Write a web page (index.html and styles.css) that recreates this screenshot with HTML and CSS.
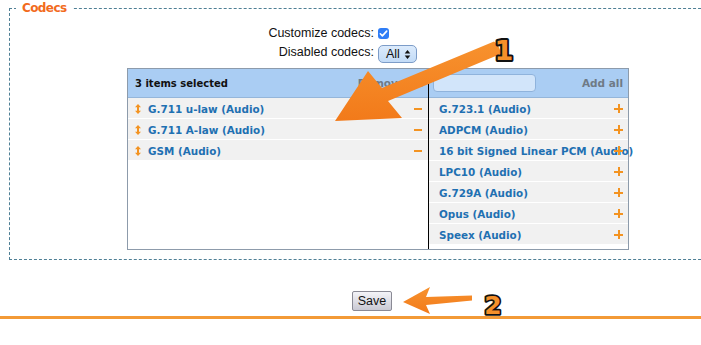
FILE: index.html
```html
<!DOCTYPE html>
<html>
<head>
<meta charset="utf-8">
<link rel="stylesheet" href="styles.css">
</head>
<body>
<fieldset class="codecs">
  <legend class="codecs-legend">Codecs</legend>
  <div class="codecs-body">
    <div class="form-grid">
      <span class="lbl">Customize codecs:</span>
      <span class="ctl"><span class="check"><svg width="11" height="11" viewBox="0 0 11 11"><path d="M2.3 5.8 L4.4 7.9 L8.7 3.1" fill="none" stroke="#fff" stroke-width="1.6" stroke-linecap="round" stroke-linejoin="round"/></svg></span></span>
      <span class="lbl">Disabled codecs:</span>
      <span class="ctl"><span class="select">All <svg width="7" height="11" viewBox="0 0 7 11"><path d="M3.5 1 L6.3 4.4 H0.7 Z M3.5 10 L6.3 6.6 H0.7 Z" fill="#111"/></svg></span></span>
    </div>
    <div class="ms">
      <div class="ms-left">
        <div class="ms-head">
          <span class="count">3 items selected</span>
          <span class="headlink">Remove all</span>
        </div>
        <ul class="list">
          <li class="item"><span class="grip"><svg width="6" height="10" viewBox="0 0 6 10"><path d="M3 0 L6 3.2 H4 V6.8 H6 L3 10 L0 6.8 H2 V3.2 H0 Z" fill="#f39321"/></svg></span><span class="name">G.711 u-law (Audio)</span><span class="minus"></span></li>
          <li class="item"><span class="grip"><svg width="6" height="10" viewBox="0 0 6 10"><path d="M3 0 L6 3.2 H4 V6.8 H6 L3 10 L0 6.8 H2 V3.2 H0 Z" fill="#f39321"/></svg></span><span class="name">G.711 A-law (Audio)</span><span class="minus"></span></li>
          <li class="item"><span class="grip"><svg width="6" height="10" viewBox="0 0 6 10"><path d="M3 0 L6 3.2 H4 V6.8 H6 L3 10 L0 6.8 H2 V3.2 H0 Z" fill="#f39321"/></svg></span><span class="name">GSM (Audio)</span><span class="minus"></span></li>
        </ul>
      </div>
      <div class="ms-right">
        <div class="ms-head">
          <input class="search" type="text">
          <span class="headlink">Add all</span>
        </div>
        <ul class="list">
          <li class="item ritem"><span class="name">G.723.1 (Audio)</span><span class="plus"></span></li>
          <li class="item ritem"><span class="name">ADPCM (Audio)</span><span class="plus"></span></li>
          <li class="item ritem"><span class="name">16 bit Signed Linear PCM (Audio)</span><span class="plus"></span></li>
          <li class="item ritem"><span class="name">LPC10 (Audio)</span><span class="plus"></span></li>
          <li class="item ritem"><span class="name">G.729A (Audio)</span><span class="plus"></span></li>
          <li class="item ritem"><span class="name">Opus (Audio)</span><span class="plus"></span></li>
          <li class="item ritem"><span class="name">Speex (Audio)</span><span class="plus"></span></li>
        </ul>
      </div>
    </div>
  </div>
</fieldset>
<div class="actions">
  <button class="save">Save</button>
</div>
<div class="rule"></div>

<svg class="annot" width="701" height="345" viewBox="0 0 701 345">
  <defs>
    <linearGradient id="og" x1="0" y1="0" x2="0" y2="1">
      <stop offset="0" stop-color="#f7922e"/>
      <stop offset="1" stop-color="#f27a1a"/>
    </linearGradient>
  </defs>
  <path d="M335 121 L368 71 L382 88 L494 41.5 Q500 45 500.5 54 L388 101 L402 118 Z" fill="url(#og)"/>
  <path d="M403 302 L430 287 L426 297 L472 295.5 L472 300.5 L426 305 L430 314 Z" fill="url(#og)"/>
  <text x="504" y="60" class="num num-big" text-anchor="middle">1</text>
  <text x="493" y="314" class="num" text-anchor="middle">2</text>
</svg>
</body>
</html>
```

FILE: styles.css
```css
html, body {
  margin: 0;
  padding: 0;
  background: #fff;
  font-family: "DejaVu Sans", Verdana, sans-serif;
  font-size: 12px;
  color: #111;
}

.codecs {
  margin: 0 -30px 0 9px;
  padding: 0 0 9px 0;
  border: 1px dashed #4f7f95;
  min-width: 0;
}

.codecs-legend {
  margin-left: 6px;
  padding: 0 6px;
  font-size: 12px;
  letter-spacing: -0.6px;
  font-weight: bold;
  color: #f26b1d;
  line-height: 16px;
}

.codecs-body {
  padding-top: 9px;
  margin-left: 117px;
  width: 502px;
}

.form-grid {
  display: grid;
  grid-template-columns: 247px auto;
  column-gap: 4px;
  row-gap: 3px;
  align-items: center;
  font-family: "Liberation Sans", Arial, sans-serif;
  font-size: 12.5px;
}

.lbl {
  text-align: right;
  line-height: 16px;
}

.ctl {
  display: flex;
  align-items: center;
  height: 16px;
}

.check {
  width: 11px;
  height: 11px;
  border-radius: 3px;
  background: #2f7df6;
  display: flex;
  align-items: center;
  justify-content: center;
}

.select {
  display: inline-flex;
  align-items: center;
  gap: 4px;
  height: 16px;
  padding: 0 5px 0 7px;
  border: 1px solid #7c9cc8;
  border-radius: 5px;
  background: linear-gradient(#dcebfc, #c2dbf7);
  font-size: 12.5px;
  margin-top: 4px;
}

.ms {
  margin-top: 8px;
  display: flex;
  border: 1px solid #8d9bab;
  height: 180px;
  width: 500px;
}

.ms-left {
  width: 300px;
  border-right: 1px solid #000;
  display: flex;
  flex-direction: column;
}

.ms-right {
  flex: 1;
  display: flex;
  flex-direction: column;
  min-width: 0;
}

.ms-head {
  height: 28px;
  background: #aacdf3;
  border-bottom: 1px solid #95b6da;
  display: flex;
  align-items: center;
  justify-content: space-between;
  padding: 0 5px 0 7px;
  font-size: 10px;
  font-weight: bold;
}

.ms-right .ms-head {
  padding-left: 4px;
}

.count {
  color: #111;
}

.headlink {
  color: #6f7a86;
  font-size: 10.5px;
}

.search {
  width: 101px;
  height: 16px;
  box-sizing: content-box;
  padding: 0;
  border: 1px solid #8fb3dc;
  border-radius: 4px;
  background: #d2e5fa;
  margin: 0;
}

.list {
  list-style: none;
  margin: 0;
  padding: 0;
}

.item {
  display: flex;
  align-items: center;
  height: 20px;
  margin-bottom: 1px;
  background: #f1f1f1;
  padding: 1px 6px 0 7px;
  box-sizing: border-box;
  font-size: 10.4px;
  font-weight: bold;
  color: #1f70b2;
  white-space: nowrap;
}

.ritem {
  padding: 1px 5px 0 10px;
}

.grip {
  width: 6px;
  display: flex;
  margin-right: 7px;
}

.name {
  flex: 1;
  min-width: 0;
}

.minus {
  width: 8px;
  height: 2px;
  background: #f39321;
}

.plus {
  width: 9px;
  height: 9px;
  background:
    linear-gradient(#f39321, #f39321) center / 9px 2px no-repeat,
    linear-gradient(#f39321, #f39321) center / 2px 9px no-repeat;
}

.actions {
  display: flex;
  justify-content: center;
  padding-top: 31px;
  padding-left: 43px;
}

.save {
  width: 40px;
  height: 20px;
  padding: 0;
  border: 1px solid #8a8a95;
  border-radius: 2px;
  background: linear-gradient(#f4f4f8, #c9c9d4);
  font-family: "Liberation Sans", Arial, sans-serif;
  font-size: 12.5px;
  color: #111;
}

.rule {
  margin-top: 5px;
  height: 3px;
  background: #f39a36;
}

.annot {
  position: absolute;
  left: 0;
  top: 0;
  pointer-events: none;
}

.num {
  font-family: "DejaVu Sans", sans-serif;
  font-weight: bold;
  font-size: 25px;
  fill: #f5902a;
  stroke: #111;
  stroke-width: 3.5px;
  paint-order: stroke fill;
  stroke-linejoin: round;
}

.num-big {
  font-size: 27px;
  stroke-width: 4px;
}
```
